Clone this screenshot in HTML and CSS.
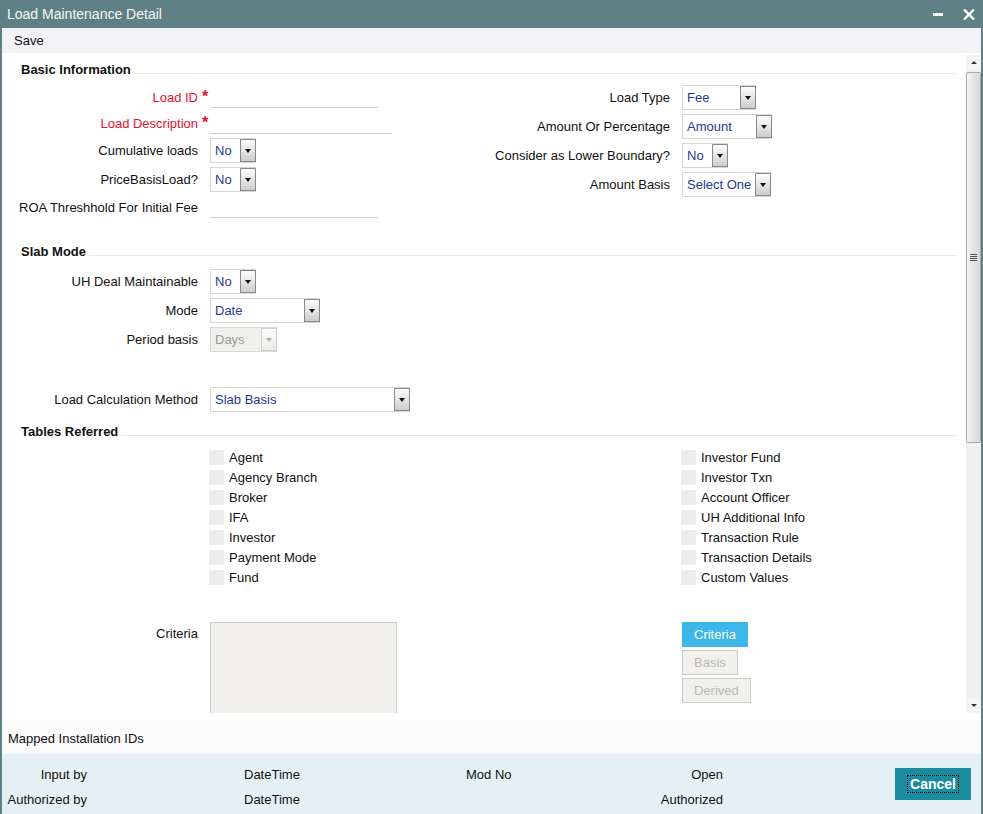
FILE: index.html
```html
<!DOCTYPE html>
<html>
<head>
<meta charset="utf-8">
<title>Load Maintenance Detail</title>
<link rel="stylesheet" href="styles.css">
</head>
<body>
<div class="window">
  <div class="titlebar">
    <span class="title">Load Maintenance Detail</span>
    <span class="win-btns">
      <span class="min"></span>
      <svg class="close" width="12" height="11" viewBox="0 0 12 11"><path d="M1 0.5L11 10.5M11 0.5L1 10.5" stroke="#fff" stroke-width="2.4"/></svg>
    </span>
  </div>
  <div class="frame">
    <div class="toolbar"><span>Save</span></div>
    <div class="body">
      <div class="form">
        <div class="sect-h"><span>Basic Information</span><i class="rule"></i></div>
        <div class="cols">
          <div class="col-l">
            <div class="row t"><span class="lbl red">Load ID</span><span class="mk">*</span><input class="inp w168" type="text"></div>
            <div class="row t"><span class="lbl red">Load Description</span><span class="mk">*</span><input class="inp w182" type="text"></div>
            <div class="row"><span class="lbl">Cumulative loads</span><span class="mk"></span><div class="sel w46"><span class="val">No</span><span class="arr"></span></div></div>
            <div class="row"><span class="lbl">PriceBasisLoad?</span><span class="mk"></span><div class="sel w46"><span class="val">No</span><span class="arr"></span></div></div>
            <div class="row t"><span class="lbl">ROA Threshhold For Initial Fee</span><span class="mk"></span><input class="inp w168" type="text"></div>
          </div>
          <div class="col-r">
            <div class="row"><span class="lbl r">Load Type</span><span class="mk"></span><div class="sel w74"><span class="val">Fee</span><span class="arr"></span></div></div>
            <div class="row"><span class="lbl r">Amount Or Percentage</span><span class="mk"></span><div class="sel w90"><span class="val">Amount</span><span class="arr"></span></div></div>
            <div class="row"><span class="lbl r">Consider as Lower Boundary?</span><span class="mk"></span><div class="sel w46"><span class="val">No</span><span class="arr"></span></div></div>
            <div class="row"><span class="lbl r">Amount Basis</span><span class="mk"></span><div class="sel w89"><span class="val">Select One</span><span class="arr"></span></div></div>
          </div>
        </div>

        <div class="sect-h slab"><span>Slab Mode</span><i class="rule"></i></div>
        <div class="slab-rows">
          <div class="row"><span class="lbl">UH Deal Maintainable</span><span class="mk"></span><div class="sel w46"><span class="val">No</span><span class="arr"></span></div></div>
          <div class="row"><span class="lbl">Mode</span><span class="mk"></span><div class="sel w110"><span class="val">Date</span><span class="arr"></span></div></div>
          <div class="row"><span class="lbl">Period basis</span><span class="mk"></span><div class="sel w67 dis"><span class="val">Days</span><span class="arr"></span></div></div>
        </div>
        <div class="row calc"><span class="lbl">Load Calculation Method</span><span class="mk"></span><div class="sel w200"><span class="val">Slab Basis</span><span class="arr"></span></div></div>

        <div class="sect-h tables"><span>Tables Referred</span><i class="rule"></i></div>
        <div class="checks">
          <div class="chk"><span class="cb"></span>Agent</div>
          <div class="chk"><span class="cb"></span>Agency Branch</div>
          <div class="chk"><span class="cb"></span>Broker</div>
          <div class="chk"><span class="cb"></span>IFA</div>
          <div class="chk"><span class="cb"></span>Investor</div>
          <div class="chk"><span class="cb"></span>Payment Mode</div>
          <div class="chk"><span class="cb"></span>Fund</div>
          <div class="chk"><span class="cb"></span>Investor Fund</div>
          <div class="chk"><span class="cb"></span>Investor Txn</div>
          <div class="chk"><span class="cb"></span>Account Officer</div>
          <div class="chk"><span class="cb"></span>UH Additional Info</div>
          <div class="chk"><span class="cb"></span>Transaction Rule</div>
          <div class="chk"><span class="cb"></span>Transaction Details</div>
          <div class="chk"><span class="cb"></span>Custom Values</div>
        </div>

        <div class="criteria">
          <span class="lbl crit">Criteria</span><span class="mk"></span>
          <div class="tarea"></div>
          <div class="btns">
            <span class="btn on">Criteria</span>
            <span class="btn off">Basis</span>
            <span class="btn off">Derived</span>
          </div>
        </div>
      </div>
      <div class="vscroll">
        <div class="sb-btn up"></div>
        <div class="sb-thumb"><span class="grip"></span></div>
        <div class="sb-track"></div>
        <div class="sb-btn down"></div>
      </div>
    </div>
    <div class="mapped">Mapped Installation IDs</div>
    <div class="footer">
      <div class="fl"><div>Input by</div><div>Authorized by</div></div>
      <div class="fdt"><div>DateTime</div><div>DateTime</div></div>
      <div class="fmod"><div>Mod No</div></div>
      <div class="fopen"><div>Open</div><div>Authorized</div></div>
      <div class="cancel"><span class="focus">Cancel</span></div>
    </div>
  </div>
</div>
</body>
</html>
```
FILE: styles.css
```css
html, body {
  margin: 0;
  padding: 0;
}
body {
  font-family: "Liberation Sans", Arial, sans-serif;
  font-size: 13px;
  color: #111;
  width: 983px;
  height: 814px;
  overflow: hidden;
}
.window {
  width: 983px;
  height: 814px;
  display: flex;
  flex-direction: column;
  background: #5f8084;
}
.titlebar {
  height: 28px;
  flex: none;
  display: flex;
  align-items: center;
  justify-content: space-between;
  padding: 0 8px 0 7px;
  color: #f3f6f6;
  font-size: 14px;
}
.win-btns {
  display: flex;
  align-items: center;
}
.min {
  width: 10px;
  height: 3px;
  background: #fff;
  margin-right: 20px;
  margin-top: 0;
}
.close {
  display: block;
}
.frame {
  flex: 1;
  margin: 0 2px;
  display: flex;
  flex-direction: column;
  background: #fff;
}
.toolbar {
  height: 25px;
  flex: none;
  background: #f3f3f7;
  line-height: 26px;
  padding-left: 12px;
}
.body {
  height: 667px;
  flex: none;
  box-sizing: border-box;
  padding-bottom: 7px;
  display: flex;
}
.form {
  flex: 1;
  overflow: hidden;
  padding-top: 6px;
}
.sect-h {
  display: flex;
  height: 20px;
  margin: 0 9px 0 19px;
}
.sect-h span {
  font-weight: bold;
  line-height: 21px;
  color: #111;
}
.rule {
  flex: 1;
  height: 14px;
  margin-left: 3px;
  border-bottom: 1px solid #e8e8e8;
}
.cols {
  display: flex;
  margin-top: 4px;
}
.col-l {
  width: 470px;
  padding-top: 1px;
}
.col-r {
  flex: 1;
}
.row {
  display: flex;
  align-items: center;
  height: 29px;
}
.row.t {
  height: 26px;
}
.lbl {
  width: 196px;
  flex: none;
  text-align: right;
  white-space: nowrap;
}
.lbl.r {
  width: 198px;
}
.red {
  color: #e5102d;
}
.mk {
  width: 12px;
  flex: none;
  color: #e5102d;
  font-size: 16px;
  font-weight: bold;
  padding-left: 4px;
  box-sizing: border-box;
  line-height: 16px;
  height: 16px;
  margin-top: -1px;
}
.inp {
  box-sizing: border-box;
  height: 21px;
  border: 0;
  border-bottom: 1px solid #cfcfcf;
  padding: 0;
  background: transparent;
  outline: none;
  font: inherit;
}
.w168 { width: 168px; }
.w182 { width: 182px; }
.sel {
  box-sizing: border-box;
  height: 25px;
  display: flex;
  border: 1px solid #d6d6d6;
  background: #fff;
}
.w46 { width: 46px; }
.w67 { width: 67px; }
.w74 { width: 74px; }
.w89 { width: 89px; }
.w90 { width: 90px; }
.w110 { width: 110px; }
.w200 { width: 200px; }
.val {
  flex: 1;
  padding-left: 4px;
  line-height: 23px;
  color: #1b3b8f;
  white-space: nowrap;
  overflow: hidden;
}
.arr {
  width: 16px;
  flex: none;
  box-sizing: border-box;
  margin-right: -1px;
  border: 1px solid #8a8a8a;
  background: linear-gradient(#fdfdfd, #cdcdcd);
  display: flex;
  align-items: center;
  justify-content: center;
}
.arr::after {
  content: "";
  border-left: 3.5px solid transparent;
  border-right: 3.5px solid transparent;
  border-top: 4px solid #111;
}
.sel.dis {
  background: #f0efeb;
  border-color: #d6d6d6;
}
.sel.dis .val {
  color: #9a9a9a;
}
.sel.dis .arr {
  border-color: #cfcfcf;
  background: linear-gradient(#fbfbfa, #ecebe7);
}
.sel.dis .arr::after {
  border-top-color: #b0b0b0;
}
.sect-h.slab {
  margin-top: 21px;
}
.slab-rows {
  margin-top: 6px;
}
.row.calc {
  margin-top: 31px;
}
.sect-h.tables {
  margin-top: 7px;
}
.checks {
  margin-top: 6px;
  margin-left: 207px;
  display: grid;
  grid-template-columns: 472px auto;
  grid-template-rows: repeat(7, 20px);
  grid-auto-flow: column;
}
.chk {
  display: flex;
  align-items: center;
  white-space: nowrap;
}
.cb {
  width: 15px;
  height: 15px;
  background: #ececec;
  margin-right: 5px;
  flex: none;
}
.criteria {
  display: flex;
  align-items: flex-start;
  margin-top: 35px;
}
.lbl.crit {
  line-height: 23px;
}
.tarea {
  width: 187px;
  height: 110px;
  flex: none;
  box-sizing: border-box;
  background: #f1f0ed;
  border: 1px solid #cdcdcd;
}
.btns {
  margin-left: 285px;
  display: flex;
  flex-direction: column;
  align-items: flex-start;
  gap: 3px;
}
.btn {
  box-sizing: border-box;
  height: 25px;
  line-height: 23px;
  padding: 0 11px;
  border: 1px solid;
  white-space: nowrap;
}
.btn.on {
  background: #3db6ea;
  border-color: #3db6ea;
  color: #fff;
}
.btn.off {
  background: #f1f0ec;
  border-color: #cacaca;
  color: #b9b9b9;
}
.vscroll {
  width: 15px;
  flex: none;
  margin-top: 2px;
  display: flex;
  flex-direction: column;
  background: #f0f0f0;
}
.sb-btn {
  height: 15px;
  flex: none;
  display: flex;
  align-items: center;
  justify-content: center;
  background: #f4f4f4;
}
.sb-btn.up::after {
  content: "";
  border-left: 3px solid transparent;
  border-right: 3px solid transparent;
  border-bottom: 3px solid #333;
}
.sb-btn.down::after {
  content: "";
  border-left: 3px solid transparent;
  border-right: 3px solid transparent;
  border-top: 3px solid #333;
}
.sb-thumb {
  height: 371px;
  flex: none;
  margin-top: 2px;
  box-sizing: border-box;
  border: 1px solid #a9a9ad;
  border-radius: 2px;
  background: linear-gradient(90deg, #f4f4f6, #e2e2e6 60%, #d8d8dc);
  display: flex;
  align-items: center;
  justify-content: center;
}
.grip {
  width: 7px;
  height: 7px;
  background: repeating-linear-gradient(#555 0 1px, transparent 1px 2px);
}
.sb-track {
  flex: 1;
}
.mapped {
  height: 34px;
  flex: none;
  box-sizing: border-box;
  line-height: 34px;
  padding: 2px 0 0 6px;
  background: #fafafa;
  color: #111;
}
.footer {
  flex: 1;
  background: #e4f0f3;
  display: flex;
  align-items: flex-start;
  padding-top: 8px;
  box-sizing: border-box;
}
.footer div div {
  height: 25px;
  line-height: 25px;
  white-space: nowrap;
}
.fl {
  width: 80px;
  margin-left: 5px;
  text-align: right;
}
.fdt {
  width: 222px;
  margin-left: 157px;
}
.fmod {
  width: 100px;
}
.fopen {
  width: 157px;
  text-align: right;
}
.cancel {
  margin-left: 172px;
  margin-top: 6px;
  width: 76px;
  height: 32px;
  background: #1b8c9d;
  display: flex;
  align-items: center;
  justify-content: center;
}
.focus {
  color: #fff;
  font-weight: bold;
  font-size: 14px;
  line-height: 16px;
  padding: 0 2px;
  border: 1px dotted #000;
}
```
